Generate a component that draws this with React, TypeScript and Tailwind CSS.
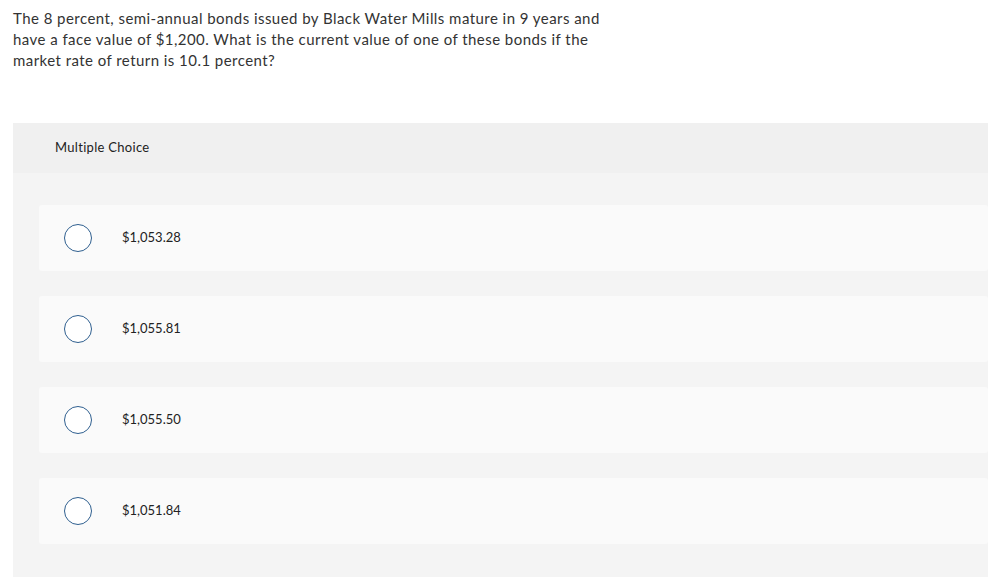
import type React from "react"

const choices: string[] = ["$1,053.28", "$1,055.81", "$1,055.50", "$1,051.84"]

const App: React.FC = () => {
  return (
    <div
      className="w-[988px] h-[577px] overflow-hidden bg-white text-[#333]"
      style={{ fontFamily: "Lato, 'Liberation Sans', sans-serif" }}
    >
      <p className="pl-[13px] pt-[8px] w-[608px] text-[15px] leading-[21px] tracking-[0.45px]">
        The 8 percent, semi-annual bonds issued by Black Water Mills mature in 9 years and have a face value of
        $1,200. What is the current value of one of these bonds if the market rate of return is 10.1 percent?
      </p>

      <div className="ml-[13px] mt-[52px] bg-[#f4f4f4] h-[460px]">
        <div className="h-[50px] bg-[#f0f0f0] flex items-center pl-[42px] text-[13px] tracking-[0.3px] text-[#222]">
          Multiple Choice
        </div>

        <div className="pt-[32px] pl-[26px] flex flex-col gap-[25px]">
          {choices.map((choice) => (
            <div key={choice} className="h-[66px] bg-[#fafafa] rounded-[3px] flex items-center">
              <div className="ml-[25px] w-[28px] h-[28px] rounded-full border-[1.5px] border-[#2f5f8f] bg-white flex-shrink-0" />
              <span className="ml-[30px] text-[13px] text-[#222]">{choice}</span>
            </div>
          ))}
        </div>
      </div>
    </div>
  )
}

export default App
